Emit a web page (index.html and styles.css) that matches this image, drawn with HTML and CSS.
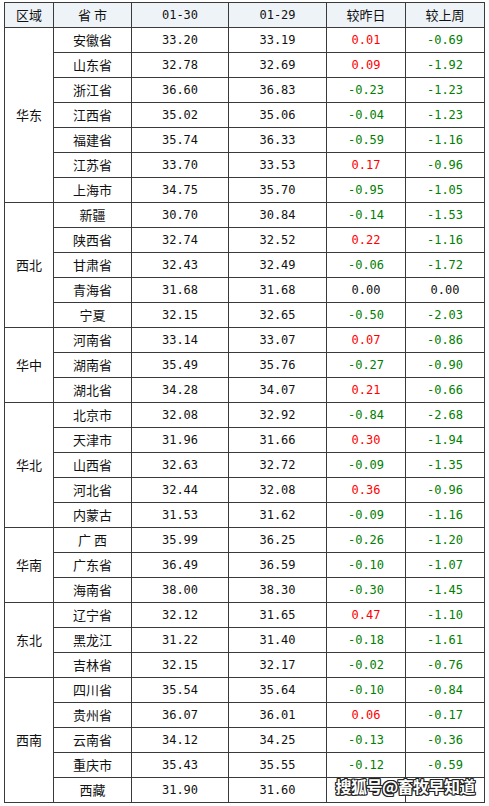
FILE: index.html
```html
<!DOCTYPE html>
<html lang="zh">
<head>
<meta charset="utf-8">
<title>价格表</title>
<link rel="stylesheet" href="styles.css">
</head>
<body>
<div class="wrap">
<table class="grid">
<colgroup>
<col class="c-reg"><col class="c-prov"><col class="c-d1"><col class="c-d2"><col class="c-dd"><col class="c-dw">
</colgroup>
<thead>
<tr><th>区域</th><th>省 市</th><th class="num">01-30</th><th class="num">01-29</th><th>较昨日</th><th>较上周</th></tr>
</thead>
<tbody>
<tr><td rowspan="7" class="reg">华东</td><td>安徽省</td><td class="num">33.20</td><td class="num">33.19</td><td class="num up">0.01</td><td class="num dn">-0.69</td></tr>
<tr><td>山东省</td><td class="num">32.78</td><td class="num">32.69</td><td class="num up">0.09</td><td class="num dn">-1.92</td></tr>
<tr><td>浙江省</td><td class="num">36.60</td><td class="num">36.83</td><td class="num dn">-0.23</td><td class="num dn">-1.23</td></tr>
<tr><td>江西省</td><td class="num">35.02</td><td class="num">35.06</td><td class="num dn">-0.04</td><td class="num dn">-1.23</td></tr>
<tr><td>福建省</td><td class="num">35.74</td><td class="num">36.33</td><td class="num dn">-0.59</td><td class="num dn">-1.16</td></tr>
<tr><td>江苏省</td><td class="num">33.70</td><td class="num">33.53</td><td class="num up">0.17</td><td class="num dn">-0.96</td></tr>
<tr><td>上海市</td><td class="num">34.75</td><td class="num">35.70</td><td class="num dn">-0.95</td><td class="num dn">-1.05</td></tr>

<tr><td rowspan="5" class="reg">西北</td><td>新疆</td><td class="num">30.70</td><td class="num">30.84</td><td class="num dn">-0.14</td><td class="num dn">-1.53</td></tr>
<tr><td>陕西省</td><td class="num">32.74</td><td class="num">32.52</td><td class="num up">0.22</td><td class="num dn">-1.16</td></tr>
<tr><td>甘肃省</td><td class="num">32.43</td><td class="num">32.49</td><td class="num dn">-0.06</td><td class="num dn">-1.72</td></tr>
<tr><td>青海省</td><td class="num">31.68</td><td class="num">31.68</td><td class="num">0.00</td><td class="num">0.00</td></tr>
<tr><td>宁夏</td><td class="num">32.15</td><td class="num">32.65</td><td class="num dn">-0.50</td><td class="num dn">-2.03</td></tr>

<tr><td rowspan="3" class="reg">华中</td><td>河南省</td><td class="num">33.14</td><td class="num">33.07</td><td class="num up">0.07</td><td class="num dn">-0.86</td></tr>
<tr><td>湖南省</td><td class="num">35.49</td><td class="num">35.76</td><td class="num dn">-0.27</td><td class="num dn">-0.90</td></tr>
<tr><td>湖北省</td><td class="num">34.28</td><td class="num">34.07</td><td class="num up">0.21</td><td class="num dn">-0.66</td></tr>

<tr><td rowspan="5" class="reg">华北</td><td>北京市</td><td class="num">32.08</td><td class="num">32.92</td><td class="num dn">-0.84</td><td class="num dn">-2.68</td></tr>
<tr><td>天津市</td><td class="num">31.96</td><td class="num">31.66</td><td class="num up">0.30</td><td class="num dn">-1.94</td></tr>
<tr><td>山西省</td><td class="num">32.63</td><td class="num">32.72</td><td class="num dn">-0.09</td><td class="num dn">-1.35</td></tr>
<tr><td>河北省</td><td class="num">32.44</td><td class="num">32.08</td><td class="num up">0.36</td><td class="num dn">-0.96</td></tr>
<tr><td>内蒙古</td><td class="num">31.53</td><td class="num">31.62</td><td class="num dn">-0.09</td><td class="num dn">-1.16</td></tr>

<tr><td rowspan="3" class="reg">华南</td><td>广 西</td><td class="num">35.99</td><td class="num">36.25</td><td class="num dn">-0.26</td><td class="num dn">-1.20</td></tr>
<tr><td>广东省</td><td class="num">36.49</td><td class="num">36.59</td><td class="num dn">-0.10</td><td class="num dn">-1.07</td></tr>
<tr><td>海南省</td><td class="num">38.00</td><td class="num">38.30</td><td class="num dn">-0.30</td><td class="num dn">-1.45</td></tr>

<tr><td rowspan="3" class="reg">东北</td><td>辽宁省</td><td class="num">32.12</td><td class="num">31.65</td><td class="num up">0.47</td><td class="num dn">-1.10</td></tr>
<tr><td>黑龙江</td><td class="num">31.22</td><td class="num">31.40</td><td class="num dn">-0.18</td><td class="num dn">-1.61</td></tr>
<tr><td>吉林省</td><td class="num">32.15</td><td class="num">32.17</td><td class="num dn">-0.02</td><td class="num dn">-0.76</td></tr>

<tr><td rowspan="5" class="reg">西南</td><td>四川省</td><td class="num">35.54</td><td class="num">35.64</td><td class="num dn">-0.10</td><td class="num dn">-0.84</td></tr>
<tr><td>贵州省</td><td class="num">36.07</td><td class="num">36.01</td><td class="num up">0.06</td><td class="num dn">-0.17</td></tr>
<tr><td>云南省</td><td class="num">34.12</td><td class="num">34.25</td><td class="num dn">-0.13</td><td class="num dn">-0.36</td></tr>
<tr><td>重庆市</td><td class="num">35.43</td><td class="num">35.55</td><td class="num dn">-0.12</td><td class="num dn">-0.59</td></tr>
<tr><td>西藏</td><td class="num">31.90</td><td class="num">31.60</td><td class="num up"></td><td class="num dn"></td></tr>
</tbody>
</table>
<div class="watermark">搜狐号@畜牧早知道</div>
</div>
</body>
</html>
```

FILE: styles.css
```css
html, body {
  margin: 0;
  padding: 0;
  background: #ffffff;
}
body {
  padding: 2px 0 0 4px;
  font-family: "Noto Sans CJK SC", "Noto Sans", sans-serif;
  font-size: 13px;
  color: #111111;
}
.wrap {
  position: relative;
  width: 480px;
}
.grid {
  border-collapse: collapse;
  width: 480px;
  table-layout: fixed;
}
.c-reg { width: 49px; }
.c-prov { width: 78px; }
.c-d1 { width: 97px; }
.c-d2 { width: 98px; }
.c-dd { width: 79px; }
.c-dw { width: 79px; }
.grid th, .grid td {
  border: 1px solid #3a3a3a;
  height: 24px;
  padding: 0;
  text-align: center;
  vertical-align: middle;
  font-weight: normal;
  line-height: 16px;
  white-space: nowrap;
}
.grid thead th {
  background: #eef3f8;
}
.num {
  font-family: "DejaVu Sans Mono", "Liberation Mono", monospace;
  font-size: 12px;
}
.up { color: #ff0000; }
.dn { color: #008000; }
.watermark {
  position: absolute;
  right: 9px;
  bottom: 5px;
  font-size: 16px;
  font-weight: bold;
  color: #ffffff;
  letter-spacing: -0.5px;
  text-shadow: 1px 0 0 #222, -1px 0 0 #222, 0 1px 0 #222, 0 -1px 0 #222, 1px 1px 0 #222, -1px -1px 0 #222, 1px -1px 0 #222, -1px 1px 0 #222;
}
```
